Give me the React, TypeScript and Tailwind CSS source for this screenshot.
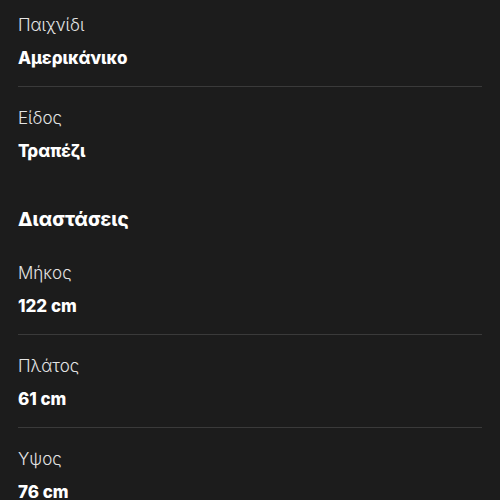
import React from "react";

type Spec = { label: string; value: string; divider?: boolean };

const general: Spec[] = [
  { label: "Παιχνίδι", value: "Αμερικάνικο", divider: true },
  { label: "Είδος", value: "Τραπέζι" },
];

const dimensions: Spec[] = [
  { label: "Μήκος", value: "122 cm", divider: true },
  { label: "Πλάτος", value: "61 cm", divider: true },
  { label: "Υψος", value: "76 cm" },
];

const SpecRow = ({ label, value, divider }: Spec) => (
  <div className={`flex flex-col gap-[9px] pt-[19px] pb-[16px] ${divider ? "border-b border-[#3a3a3a]" : ""}`}>
    <span className="text-[17px] leading-6 font-light text-[#e4e4e4]">{label}</span>
    <span className="text-[17px] leading-6 font-extrabold text-white">{value}</span>
  </div>
);

export default function App() {
  return (
    <div
      className="w-[500px] h-[500px] overflow-hidden bg-[#1c1c1c] px-[18px]"
      style={{ fontFamily: "Inter, 'Noto Sans', sans-serif" }}
    >
      <div className="-mt-[6px]">
        {general.map((s) => (
          <SpecRow key={s.label} {...s} />
        ))}
      </div>
      <h2 className="mt-[27px] text-[19px] leading-7 font-extrabold text-white">Διαστάσεις</h2>
      <div className="mt-[8px]">
        {dimensions.map((s) => (
          <SpecRow key={s.label} {...s} />
        ))}
      </div>
    </div>
  );
}
